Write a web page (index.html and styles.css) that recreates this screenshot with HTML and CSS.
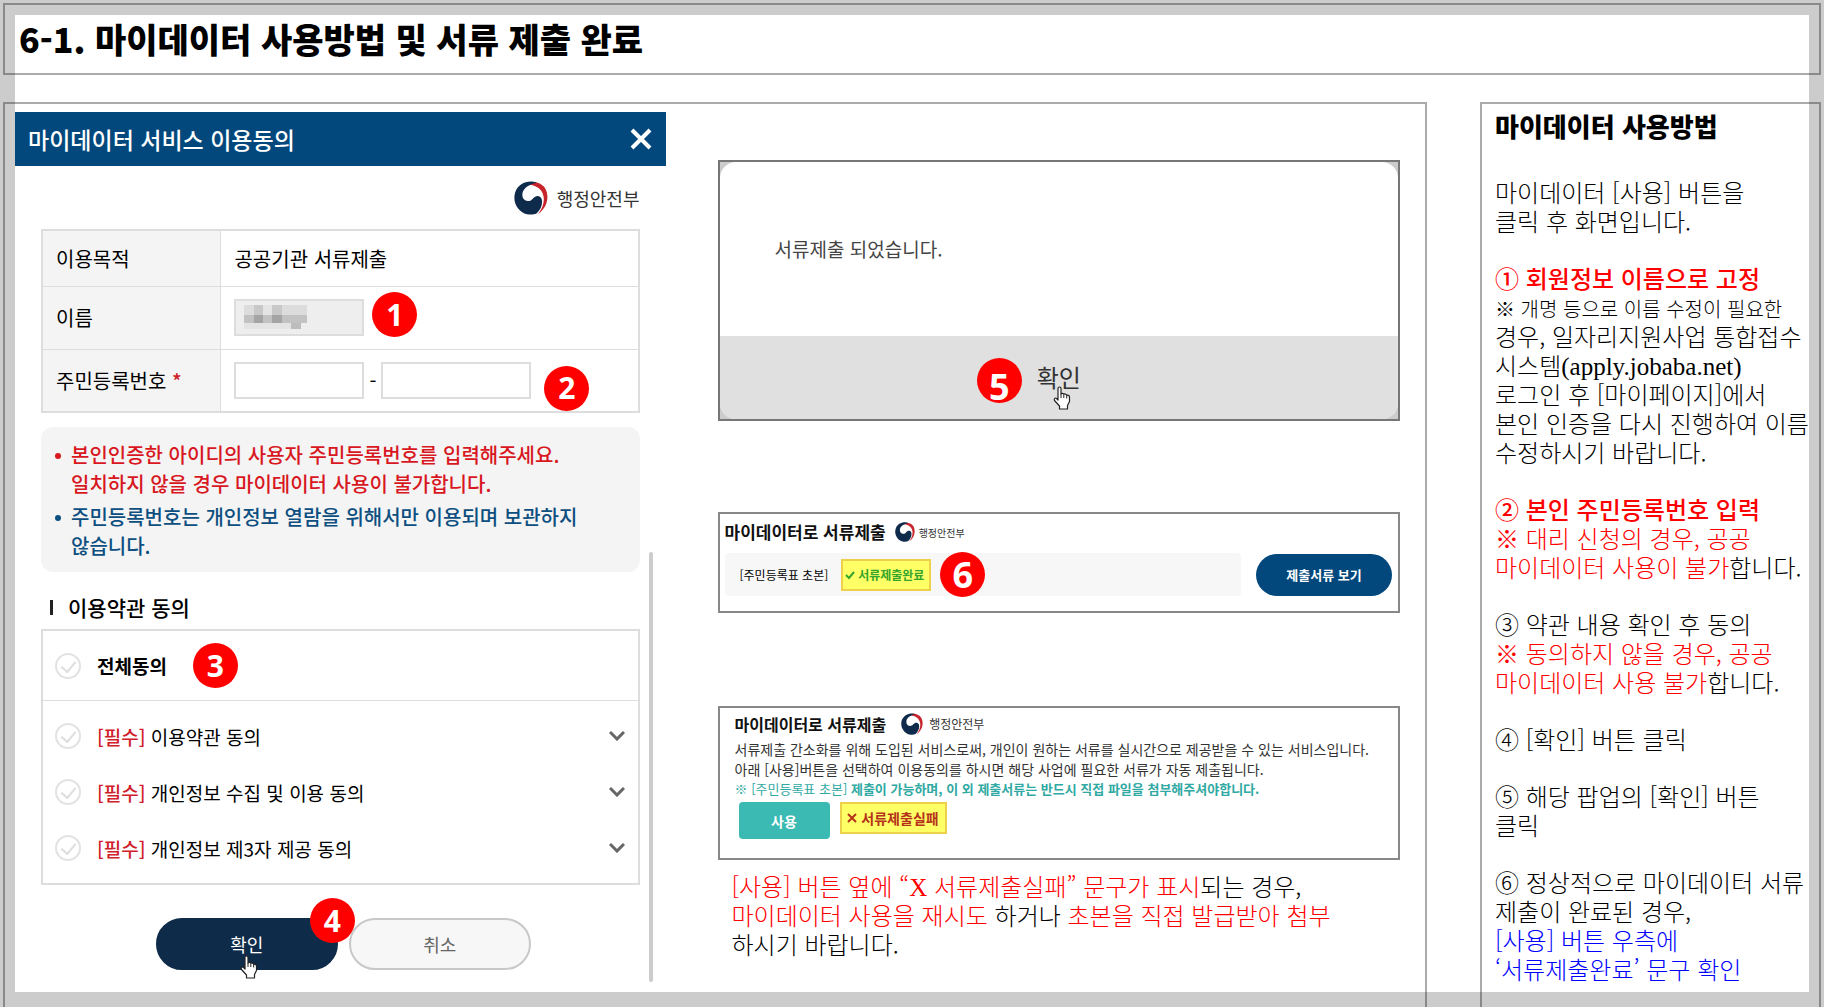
FILE: index.html
```html
<!DOCTYPE html>
<html lang="ko">
<head>
    <meta charset="UTF-8">
    <meta name="viewport" content="width=device-width, initial-scale=1.0">
    <title>마이데이터 사용방법 및 서류 제출 완료</title>
    <link rel="stylesheet" href="styles.css">
</head>
<body>
    <!-- Shared icons -->
    <svg class="sprite" aria-hidden="true">
        <symbol id="icon-gov" viewBox="0 0 34 34">
            <path fill="#c8242c" d="M12 3.500C17 0 26 0 31 7C36 15.500 33 27 24 33C30 26 32 16 27 9.500C23 4.500 17 3.500 12 3.500Z"/>
            <path fill="#0f2b4c" d="M23 1.700C14-1.500 4.500 2.500 1.300 11C-2 21 4 31 13 33.200C17 34 20 33.500 22.500 32.500C27.500 28 29 22 27.500 17.500C26 14 21.500 14 19 17.500C16.500 21 11 21 9 17C6.500 11 11 4 23 1.700Z"/>
        </symbol>
        <symbol id="icon-hand" viewBox="0 0 18 24">
            <path fill="#fff" stroke="#222" stroke-width="1.200" stroke-linejoin="round" d="M5 14V2.500C5 .5 8 .5 8 2.500V8C8.500 7 10.500 7 10.800 8.500C11.500 7.500 13.500 8 13.700 9.500C14.500 8.800 16.500 9.300 16.500 11V15.500L14.500 19.500V23H6.500V20L1.500 14.500C.5 12.500 2.500 11.500 3.500 12.500Z"/>
            <path stroke="#222" d="M8 8V12M10.800 9V12M13.700 10V12.500"/>
        </symbol>
        <symbol id="icon-chevron" viewBox="0 0 16 10">
            <path fill="none" stroke="#666" stroke-width="3" d="M1 1L8 8L15 1"/>
        </symbol>
    </svg>

    <header class="page-header">
        <h1>6-1. 마이데이터 사용방법 및 서류 제출 완료</h1>
    </header>

    <main class="page-main">
        <div class="content">
            <!-- Consent popup -->
            <section class="consent">
                <div class="consent-header">
                    <h2>마이데이터 서비스 이용동의</h2>
                    <button type="button" class="close-btn" aria-label="닫기">
                        <svg viewBox="0 0 22 22"><path d="M2 2L20 20M20 2L2 20"/></svg>
                    </button>
                </div>

                <div class="consent-body">
                    <div class="ministry">
                        <svg><use href="#icon-gov"/></svg>
                        <span>행정안전부</span>
                    </div>

                    <table class="info-table">
                        <tr>
                            <th scope="row">이용목적</th>
                            <td>공공기관 서류제출</td>
                        </tr>
                        <tr>
                            <th scope="row"><label for="name">이름</label></th>
                            <td>
                                <div class="field-row">
                                    <div class="name-field">
                                        <input type="text" id="name" class="field" readonly>
                                        <svg class="mosaic" viewBox="0 0 63 24">
                                            <path fill="#dcdcdc" d="M0 0H63V18H0Z"/>
                                            <path fill="#c2c2c2" d="M0 10H63V18H0Z"/>
                                            <path fill="#c8c8c8" d="M10 0H19V10H10ZM28 0H38V10H28Z"/>
                                            <path fill="#a4a4a4" d="M10 10H19V18H10ZM28 10H38V18H28Z"/>
                                            <path fill="#e4e4e4" d="M19 0H28V10H19ZM0 18H47V24H0Z"/>
                                            <path fill="#bdbdbd" d="M47 18H57V24H47Z"/>
                                        </svg>
                                    </div>
                                    <span class="badge badge-1">1</span>
                                </div>
                            </td>
                        </tr>
                        <tr>
                            <th scope="row"><label for="ssn-front">주민등록번호 <em>*</em></label></th>
                            <td>
                                <div class="field-row">
                                    <input type="text" id="ssn-front" class="field">
                                    <span class="dash">-</span>
                                    <input type="text" class="field field-wide" aria-label="주민등록번호 뒷자리">
                                    <span class="badge badge-2">2</span>
                                </div>
                            </td>
                        </tr>
                    </table>

                    <ul class="notice">
                        <li class="notice-warn">본인인증한 아이디의 사용자 주민등록번호를 입력해주세요.<br>일치하지 않을 경우 마이데이터 사용이 불가합니다.</li>
                        <li>주민등록번호는 개인정보 열람을 위해서만 이용되며 보관하지<br>않습니다.</li>
                    </ul>

                    <h3 class="terms-title">이용약관 동의</h3>
                    <div class="terms">
                        <div class="terms-all">
                            <label><input type="checkbox"><strong>전체동의</strong></label>
                            <span class="badge">3</span>
                        </div>
                        <ul class="terms-list">
                            <li>
                                <label><input type="checkbox"><span><em>[필수]</em> 이용약관 동의</span></label>
                                <button type="button" aria-label="펼치기"><svg><use href="#icon-chevron"/></svg></button>
                            </li>
                            <li>
                                <label><input type="checkbox"><span><em>[필수]</em> 개인정보 수집 및 이용 동의</span></label>
                                <button type="button" aria-label="펼치기"><svg><use href="#icon-chevron"/></svg></button>
                            </li>
                            <li>
                                <label><input type="checkbox"><span><em>[필수]</em> 개인정보 제3자 제공 동의</span></label>
                                <button type="button" aria-label="펼치기"><svg><use href="#icon-chevron"/></svg></button>
                            </li>
                        </ul>
                    </div>

                    <div class="consent-actions">
                        <div class="action">
                            <button type="button" class="pill pill-primary">확인</button>
                            <span class="badge badge-4">4</span>
                            <svg class="hand"><use href="#icon-hand"/></svg>
                        </div>
                        <button type="button" class="pill">취소</button>
                    </div>
                </div>
                <div class="scrollbar"></div>
            </section>

            <!-- Result screens -->
            <div class="results">
                <section class="alert">
                    <div class="alert-inner">
                        <p>서류제출 되었습니다.</p>
                        <div class="alert-footer">
                            <div class="action">
                                <button type="button">확인</button>
                                <span class="badge badge-large badge-5">5</span>
                                <svg class="hand"><use href="#icon-hand"/></svg>
                            </div>
                        </div>
                    </div>
                </section>

                <section class="card card-done">
                    <div class="card-title">
                        <h2>마이데이터로 서류제출</h2>
                        <svg><use href="#icon-gov"/></svg>
                        <span>행정안전부</span>
                    </div>
                    <div class="done-row">
                        <div class="done-status">
                            <span>[주민등록표 초본]</span>
                            <span class="tag tag-ok">
                                <svg viewBox="0 0 10 10"><path d="M1 5L4 8L9 2"/></svg>서류제출완료
                            </span>
                            <span class="badge badge-large">6</span>
                        </div>
                        <button type="button" class="view-btn">제출서류 보기</button>
                    </div>
                </section>

                <section class="card card-fail">
                    <div class="card-title">
                        <h2>마이데이터로 서류제출</h2>
                        <svg><use href="#icon-gov"/></svg>
                        <span>행정안전부</span>
                    </div>
                    <p>서류제출 간소화를 위해 도입된 서비스로써, 개인이 원하는 서류를 실시간으로 제공받을 수 있는 서비스입니다.<br>아래 [사용]버튼을 선택하여 이용동의를 하시면 해당 사업에 필요한 서류가 자동 제출됩니다.</p>
                    <p class="fail-note">※ [주민등록표 초본] <strong>제출이 가능하며, 이 외 제출서류는 반드시 직접 파일을 첨부해주셔야합니다.</strong></p>
                    <div class="fail-row">
                        <button type="button" class="use-btn">사용</button>
                        <span class="tag tag-fail">
                            <svg viewBox="0 0 10 10"><path d="M1 1L9 9M9 1L1 9"/></svg>서류제출실패
                        </span>
                    </div>
                </section>

                <p class="retry"><span class="red">[사용] 버튼 옆에 “<span class="latin">X</span> 서류제출실패” 문구가 표시</span>되는 경우,<br><span class="red">마이데이터 사용을 재시도</span> 하거나 <span class="red">초본을 직접 발급받아 첨부</span><br>하시기 바랍니다.</p>
            </div>
        </div>

        <aside class="guide">
            <h2>마이데이터 사용방법</h2>
            <p>마이데이터 [사용] 버튼을<br>클릭 후 화면입니다.</p>
            <p>
                <strong class="red">① 회원정보 이름으로 고정</strong><br>
                <span class="tight">※ 개명 등으로 이름 수정이 필요한</span><br>
                경우, 일자리지원사업 통합접수<br>
                시스템<span class="latin">(apply.jobaba.net)</span><br>
                로그인 후 [마이페이지]에서<br>
                본인 인증을 다시 진행하여 이름<br>
                수정하시기 바랍니다.
            </p>
            <p>
                <strong class="red">② 본인 주민등록번호 입력</strong><br>
                <span class="red">※ 대리 신청의 경우, 공공<br>마이데이터 사용이 불가</span>합니다.
            </p>
            <p>
                ③ 약관 내용 확인 후 동의<br>
                <span class="red">※ 동의하지 않을 경우, 공공<br>마이데이터 사용 불가</span>합니다.
            </p>
            <p>④ [확인] 버튼 클릭</p>
            <p>⑤ 해당 팝업의 [확인] 버튼<br>클릭</p>
            <p>
                ⑥ 정상적으로 마이데이터 서류<br>
                제출이 완료된 경우,<br>
                <span class="blue">[사용] 버튼 우측에<br>‘서류제출완료’ 문구 확인</span>
            </p>
        </aside>
    </main>
</body>
</html>
```
FILE: styles.css
```css
* {
    margin: 0;
    padding: 0;
    box-sizing: border-box;
}

body {
    font-family: 'Noto Sans CJK KR', sans-serif;
    color: #000;
    background: #fff;
    box-shadow: inset 0 0 0 15px #ccc;
    min-height: 100vh;
    padding: 3px 3px 0;
    display: flex;
    flex-direction: column;
    gap: 27px;
}

button,
input {
    font: inherit;
    color: inherit;
}

button {
    border: none;
    background: none;
    cursor: pointer;
}

ul {
    list-style: none;
}

em {
    font-style: normal;
    font-weight: 500;
    color: #d0202a;
}

.sprite {
    position: absolute;
    width: 0;
    height: 0;
}

.red {
    color: #f00;
}

.blue {
    color: #00f;
}

.latin {
    font-family: 'Liberation Serif', serif;
    font-size: 25px;
    line-height: 20px;
}

/* Page frame */
.page-header {
    height: 72px;
    padding: 0 14px;
    border: 2px solid rgba(0, 0, 0, 0.33);
}

.page-header h1 {
    font-size: 34px;
    font-weight: 900;
    line-height: 68px;
}

.page-main {
    flex: 1;
    display: grid;
    grid-template-columns: 1424fr 341fr;
    gap: 53px;
}

.content,
.guide {
    border: 2px solid rgba(0, 0, 0, 0.33);
    border-bottom: none;
}

.content {
    display: grid;
    grid-template-columns: 651fr 683fr;
    gap: 52px;
    align-items: start;
    padding: 8px 25px 0 10px;
}

/* Number badges */
.badge {
    display: flex;
    align-items: center;
    justify-content: center;
    flex: none;
    width: 45px;
    height: 45px;
    border-radius: 50%;
    background: #f00;
    color: #fff;
    font-family: 'Open Sans', sans-serif;
    font-size: 30px;
    font-weight: 700;
    line-height: 1;
}

.badge-large {
    font-size: 36px;
}

.badge-1,
.badge-2,
.badge-4,
.badge-5 {
    position: absolute;
}

.badge-1 {
    left: 138px;
    top: -7px;
}

.badge-2 {
    left: 310px;
    top: 4px;
}

.badge-4 {
    right: -17px;
    top: -20px;
}

.badge-5 {
    right: 59px;
    top: 1px;
    padding-top: 12px;
}

.action {
    position: relative;
}

.hand {
    position: absolute;
    width: 18px;
    height: 24px;
}

/* Consent popup */
.consent {
    position: relative;
    padding-bottom: 12px;
}

.consent-header {
    display: flex;
    align-items: center;
    justify-content: space-between;
    height: 54px;
    padding: 0 14px 0 13px;
    background: #02487d;
    color: #fff;
}

.consent-header h2 {
    font-size: 23px;
    font-weight: 500;
}

.close-btn {
    width: 22px;
    height: 22px;
}

.close-btn svg {
    display: block;
    stroke: #fff;
    stroke-width: 4;
}

.consent-body {
    padding: 0 26px;
}

.ministry {
    display: flex;
    align-items: center;
    justify-content: flex-end;
    gap: 9px;
    height: 63px;
    color: #333;
    font-size: 18px;
}

.ministry svg {
    width: 34px;
    height: 34px;
}

.info-table {
    width: 100%;
    border-collapse: collapse;
    border: 2px solid #ddd;
    font-size: 20px;
}

.info-table tr {
    height: 63px;
    border-bottom: 1px solid #ddd;
}

.info-table tr:first-child {
    height: 56px;
}

.info-table th {
    width: 30%;
    padding-left: 13px;
    background: #f4f4f4;
    border-right: 1px solid #ddd;
    font-weight: 400;
    text-align: left;
}

.info-table td {
    padding-left: 13px;
}

.field-row {
    position: relative;
    display: flex;
    align-items: center;
}

.name-field {
    position: relative;
    height: 37px;
}

.field {
    width: 130px;
    height: 37px;
    padding: 0 8px;
    border: 2px solid #ddd;
    background: #fff;
    font-size: 18px;
}

.field:read-only {
    background: #eee;
}

.field-wide {
    width: 150px;
}

.dash {
    width: 17px;
    text-align: center;
}

.mosaic {
    position: absolute;
    left: 10px;
    top: 6px;
    width: 63px;
    height: 24px;
}

.notice {
    margin-top: 14px;
    padding: 13px 15px 12px 30px;
    border-radius: 12px;
    background: #f4f4f4;
    color: #0d4f80;
    font-size: 20px;
    font-weight: 500;
    line-height: 29px;
    white-space: nowrap;
}

.notice li {
    position: relative;
}

.notice li + li {
    margin-top: 4px;
}

.notice li::before {
    content: '';
    position: absolute;
    left: -16px;
    top: 13px;
    width: 6px;
    height: 6px;
    border-radius: 50%;
    background: currentColor;
}

.notice .notice-warn {
    color: #d8171f;
}

.terms-title {
    display: flex;
    align-items: center;
    gap: 15px;
    height: 57px;
    padding: 13px 0 0 9px;
    font-size: 21px;
    font-weight: 500;
}

.terms-title::before {
    content: '';
    width: 3px;
    height: 15px;
    background: #222;
}

.terms {
    border: 2px solid #ddd;
    font-size: 19px;
}

.terms label {
    display: flex;
    align-items: center;
    gap: 16px;
}

.terms strong {
    font-weight: 700;
}

.terms input {
    appearance: none;
    position: relative;
    width: 26px;
    height: 26px;
    border: 2px solid #e2e2e2;
    border-radius: 50%;
}

.terms input::after {
    content: '';
    position: absolute;
    left: 7px;
    top: 3px;
    width: 7px;
    height: 12px;
    border: solid #ddd;
    border-width: 0 2px 2px 0;
    transform: rotate(40deg);
}

.terms input:checked {
    border-color: #02487d;
}

.terms-all {
    display: flex;
    align-items: center;
    gap: 26px;
    height: 70px;
    padding-left: 12px;
    border-bottom: 1px solid #ddd;
}

.terms-list {
    padding: 7px 13px 7px 12px;
}

.terms-list li {
    display: flex;
    align-items: center;
    justify-content: space-between;
    height: 56px;
}

.terms-list svg {
    display: block;
    width: 16px;
    height: 10px;
}

.consent-actions {
    display: flex;
    justify-content: center;
    gap: 11px;
    margin: 33px 0 0 6px;
}

.pill {
    width: 182px;
    height: 52px;
    border: 2px solid #c8c8c8;
    border-radius: 26px;
    background: #f7f7f7;
    color: #666;
    font-size: 18px;
}

.pill-primary {
    border-color: #0f2b4a;
    background: #0f2b4a;
    color: #fff;
}

.consent-actions .hand {
    left: 84px;
    top: 37px;
}

.scrollbar {
    position: absolute;
    right: 13px;
    top: 440px;
    bottom: 0;
    width: 4px;
    border-radius: 2px;
    background: #ccc;
}

/* Result screens */
.results {
    padding-top: 48px;
}

.alert {
    border: 2px solid #777;
    background: #ccc;
}

.alert-inner {
    border-radius: 16px;
    background: #fff;
    overflow: hidden;
}

.alert p {
    height: 174px;
    padding-left: 55px;
    color: #444;
    font-size: 19px;
    line-height: 174px;
}

.alert-footer {
    display: flex;
    justify-content: center;
    height: 83px;
    padding-top: 21px;
    background: #e0e0e0;
}

.alert-footer button {
    color: #333;
    font-size: 24px;
    line-height: 40px;
}

.alert-footer .hand {
    left: 16px;
    top: 29px;
}

.card {
    border: 2px solid #888;
    background: #fff;
}

.card-title {
    display: flex;
    align-items: center;
    color: #333;
}

.card-done {
    height: 101px;
    margin-top: 91px;
    padding: 7px 6px 0 5px;
}

.card-title h2 {
    color: #111;
    font-size: 17px;
    font-weight: 700;
    line-height: 22px;
}

.card-done .card-title {
    font-size: 10px;
}

.card-done .card-title svg {
    width: 20px;
    height: 20px;
    margin: 0 4px 0 9px;
}

.done-row {
    display: flex;
    align-items: center;
    gap: 15px;
    margin-top: 10px;
}

.done-status {
    flex: 1;
    display: flex;
    align-items: center;
    height: 43px;
    padding-left: 15px;
    border-radius: 4px;
    background: #f7f7f7;
    font-size: 12px;
}

.done-status .badge {
    margin-left: 9px;
}

.tag {
    display: flex;
    align-items: center;
    justify-content: center;
    gap: 4px;
    height: 32px;
    border: 2px solid #eed14a;
    background: #ff6;
    font-weight: 700;
}

.tag svg {
    width: 10px;
    height: 10px;
    fill: none;
    stroke: currentColor;
    stroke-width: 2;
}

.tag-ok {
    width: 90px;
    gap: 3px;
    padding-right: 3px;
    margin-left: 13px;
    color: #35a52c;
}

.tag-fail {
    width: 107px;
    color: #b5321a;
    font-size: 14px;
}

.view-btn {
    width: 136px;
    height: 42px;
    border-radius: 21px;
    background: #02487d;
    color: #fff;
    font-size: 13px;
    font-weight: 700;
}

.card-fail {
    height: 154px;
    margin-top: 93px;
    padding: 5px 15px 0;
    color: #333;
    font-size: 14px;
    line-height: 20px;
    white-space: nowrap;
}

.card-fail .card-title {
    font-size: 12px;
}

.card-fail .card-title h2 {
    font-size: 16px;
}

.card-fail .card-title svg {
    width: 22px;
    height: 22px;
    margin: 0 6px 0 15px;
}

.card-fail p {
    margin-top: 4px;
}

.card-fail .fail-note {
    margin-top: 0;
    color: #2fa9a3;
    font-size: 13px;
}

.fail-row {
    display: flex;
    gap: 10px;
    margin: 3px 0 0 4px;
}

.use-btn {
    width: 91px;
    height: 37px;
    border-radius: 4px;
    background: #3abab3;
    color: #fff;
    font-weight: 700;
}

.retry {
    margin: 11px 0 0 14px;
    font-size: 24px;
    font-weight: 300;
    line-height: 29px;
    white-space: nowrap;
}

/* Guide column */
.guide {
    padding: 3px 0 0 13px;
    font-size: 24px;
    font-weight: 300;
    line-height: 29px;
    white-space: nowrap;
}

.guide h2 {
    font-size: 26px;
    font-weight: 900;
    line-height: 38px;
    margin-bottom: 32px;
}

.guide p {
    margin-bottom: 28px;
}

.guide p:last-child {
    margin-bottom: 0;
}

.guide strong {
    font-weight: 500;
}

.guide .tight {
    font-size: 20px;
    line-height: 20px;
}
```
